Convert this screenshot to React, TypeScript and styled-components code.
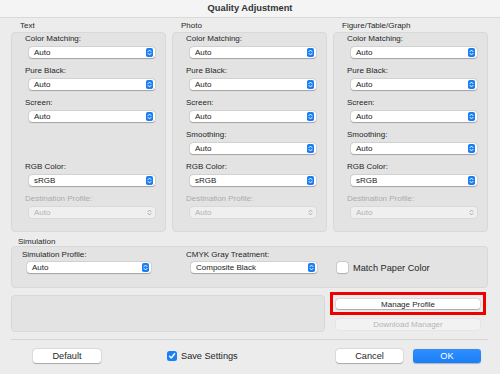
import styled, { createGlobalStyle } from "styled-components";

const GlobalStyle = createGlobalStyle`
  html, body {
    margin: 0;
    padding: 0;
    background: #ececec;
  }
  * {
    box-sizing: border-box;
  }
`;

const Window = styled.div`
  width: 500px;
  height: 374px;
  display: flex;
  flex-direction: column;
  background: #ececec;
  font-family: "Liberation Sans", Arial, sans-serif;
  color: #262626;
  overflow: hidden;
`;

const TitleBar = styled.div`
  height: 18px;
  flex: none;
  display: flex;
  align-items: center;
  justify-content: center;
  background: #f4f4f4;
  border-bottom: 1px solid #d9d9d9;
  font-size: 9.3px;
  font-weight: 700;
  color: #333;
  padding-bottom: 1px;
`;

const Body = styled.div`
  padding: 0 12px 0 11px;
  display: flex;
  flex-direction: column;
`;

const Columns = styled.div`
  display: grid;
  grid-template-columns: repeat(3, 155px);
  column-gap: 6px;
  margin-top: 3px;
`;

const SectionLabel = styled.div<{ $indent?: number; $top?: number }>`
  font-size: 8px;
  line-height: 10px;
  height: 10px;
  margin-top: ${(p) => p.$top ?? 0}px;
  padding-left: ${(p) => p.$indent ?? 9}px;
  color: #2a2a2a;
`;

const GroupBox = styled.div`
  background: #e3e3e3;
  border: 1px solid #d8d8d8;
  border-radius: 4px;
`;

const ColumnBox = styled(GroupBox)`
  margin-top: 1px;
  height: 200px;
  padding: 1px 10px 0 13px;
  display: flex;
  flex-direction: column;
`;

const Field = styled.div`
  display: flex;
  flex-direction: column;
  & + & {
    margin-top: 8px;
  }
`;

const Spacer = styled.div`
  height: 24px;
  margin-top: 8px;
  & + ${Field} {
    margin-top: 8px;
  }
`;

const FieldLabel = styled.div<{ $disabled?: boolean }>`
  font-size: 8px;
  line-height: 10px;
  height: 10px;
  white-space: nowrap;
  color: ${(p) => (p.$disabled ? "#ababab" : "#262626")};
`;

const Select = styled.div<{ $width: number; $disabled?: boolean }>`
  margin-top: 3px;
  margin-left: 4px;
  width: ${(p) => p.$width}px;
  height: 11px;
  border-radius: 3px;
  background: ${(p) => (p.$disabled ? "#efefef" : "#ffffff")};
  box-shadow: ${(p) =>
    p.$disabled
      ? "0 0 0 0.5px rgba(0,0,0,0.08)"
      : "0 0.5px 1px rgba(0,0,0,0.25), 0 0 0 0.5px rgba(0,0,0,0.1)"};
  display: flex;
  align-items: center;
  justify-content: space-between;
  padding: 0 2px 0 5px;
  font-size: 8px;
  color: ${(p) => (p.$disabled ? "#b3b3b3" : "#222")};
`;

const Stepper = ({ disabled }: { disabled?: boolean }) => (
  <svg width="7" height="9" viewBox="0 0 7 9">
    {!disabled && <rect x="0" y="0" width="7" height="9" rx="1.8" fill="#1c7ef7" />}
    <path
      d="M2 3.6 L3.5 2.1 L5 3.6 M2 5.4 L3.5 6.9 L5 5.4"
      fill="none"
      stroke={disabled ? "#a8a8a8" : "#fff"}
      strokeWidth="1"
      strokeLinecap="round"
      strokeLinejoin="round"
    />
  </svg>
);

const Popup = ({
  value,
  width = 126,
  disabled,
}: {
  value: string;
  width?: number;
  disabled?: boolean;
}) => (
  <Select $width={width} $disabled={disabled}>
    <span>{value}</span>
    <Stepper disabled={disabled} />
  </Select>
);

const SimulationLabel = styled(SectionLabel)`
  height: 9px;
  line-height: 9px;
`;

const SimulationBox = styled(GroupBox)`
  height: 42px;
  display: grid;
  grid-template-columns: 164px 151px auto;
  padding: 3px 0 0 10px;
`;

const SimField = styled.div`
  display: flex;
  flex-direction: column;
  & ${Select} {
    margin-top: 2px;
    margin-left: 5px;
  }
`;

const CheckRow = styled.label`
  display: flex;
  align-items: center;
  gap: 5px;
  height: 11px;
  font-size: 9.2px;
  color: #262626;
`;

const MatchRow = styled(CheckRow)`
  margin-top: 12px;
`;

const CheckBox = styled.span<{ $checked?: boolean }>`
  width: ${(p) => (p.$checked ? 10 : 11)}px;
  height: ${(p) => (p.$checked ? 10 : 11)}px;
  border-radius: 2.5px;
  display: inline-flex;
  align-items: center;
  justify-content: center;
  background: ${(p) => (p.$checked ? "#1c7ef7" : "#fff")};
  box-shadow: ${(p) =>
    p.$checked
      ? "none"
      : "0 0 0 0.5px rgba(0,0,0,0.2), 0 0.5px 1px rgba(0,0,0,0.15)"};
`;

const Check = () => (
  <svg width="10" height="10" viewBox="0 0 10 10">
    <path
      d="M2.6 5.2 L4.3 7 L7.6 2.8"
      fill="none"
      stroke="#fff"
      strokeWidth="1.4"
      strokeLinecap="round"
      strokeLinejoin="round"
    />
  </svg>
);

const ProfileRow = styled.div`
  display: grid;
  grid-template-columns: 314px 156px;
  column-gap: 5px;
  margin-top: 4px;
`;

const EmptyBox = styled(GroupBox)`
  margin-top: 3px;
  height: 37px;
`;

const ProfileActions = styled.div`
  display: flex;
  flex-direction: column;
`;

const Highlight = styled.div`
  border: 3px solid #ee0000;
  padding: 4px 3px 3px;
`;

const SmallButton = styled.button<{ $disabled?: boolean }>`
  all: unset;
  box-sizing: border-box;
  width: 144px;
  height: ${(p) => (p.$disabled ? 11 : 10)}px;
  display: flex;
  align-items: center;
  justify-content: center;
  border-radius: 2.5px;
  font-family: "Liberation Sans", Arial, sans-serif;
  font-size: 8px;
  background: ${(p) => (p.$disabled ? "#f2f2f2" : "#fff")};
  color: ${(p) => (p.$disabled ? "#b5b5b5" : "#262626")};
  box-shadow: ${(p) =>
    p.$disabled
      ? "0 0 0 0.5px rgba(0,0,0,0.06)"
      : "0 0.5px 1px rgba(0,0,0,0.25), 0 0 0 0.5px rgba(0,0,0,0.1)"};
`;

const DownloadButton = styled(SmallButton)`
  margin: 4px 0 0 6px;
`;

const Separator = styled.div`
  margin-top: 7px;
  height: 1px;
  background: #d6d6d6;
`;

const Footer = styled.div`
  margin-top: 9px;
  display: flex;
  align-items: center;
  padding-right: 7px;
`;

const PushButton = styled.button<{ $primary?: boolean; $width: number }>`
  all: unset;
  box-sizing: border-box;
  width: ${(p) => p.$width}px;
  height: 14px;
  display: flex;
  align-items: center;
  justify-content: center;
  border-radius: 3px;
  font-family: "Liberation Sans", Arial, sans-serif;
  font-size: 9.2px;
  color: ${(p) => (p.$primary ? "#fff" : "#262626")};
  background: ${(p) =>
    p.$primary ? "linear-gradient(#2f8ffc, #1a7ef8)" : "#fff"};
  box-shadow: ${(p) =>
    p.$primary
      ? "0 0.5px 1px rgba(0,0,0,0.25)"
      : "0 0.5px 1px rgba(0,0,0,0.25), 0 0 0 0.5px rgba(0,0,0,0.1)"};
`;

const DefaultButton = styled(PushButton)`
  margin-left: 22px;
`;

const SaveRow = styled(CheckRow)`
  margin-left: 66px;
  gap: 4px;
  height: 10px;
  margin-top: -1px;
`;

const RightButtons = styled.div`
  margin-left: auto;
  display: flex;
  gap: 10px;
`;

type Row = { label: string; value: string; disabled?: boolean } | null;

const COLUMNS: { title: string; rows: Row[] }[] = [
  {
    title: "Text",
    rows: [
      { label: "Color Matching:", value: "Auto" },
      { label: "Pure Black:", value: "Auto" },
      { label: "Screen:", value: "Auto" },
      null,
      { label: "RGB Color:", value: "sRGB" },
      { label: "Destination Profile:", value: "Auto", disabled: true },
    ],
  },
  {
    title: "Photo",
    rows: [
      { label: "Color Matching:", value: "Auto" },
      { label: "Pure Black:", value: "Auto" },
      { label: "Screen:", value: "Auto" },
      { label: "Smoothing:", value: "Auto" },
      { label: "RGB Color:", value: "sRGB" },
      { label: "Destination Profile:", value: "Auto", disabled: true },
    ],
  },
  {
    title: "Figure/Table/Graph",
    rows: [
      { label: "Color Matching:", value: "Auto" },
      { label: "Pure Black:", value: "Auto" },
      { label: "Screen:", value: "Auto" },
      { label: "Smoothing:", value: "Auto" },
      { label: "RGB Color:", value: "sRGB" },
      { label: "Destination Profile:", value: "Auto", disabled: true },
    ],
  },
];

const App = () => {
  return (
    <Window>
      <GlobalStyle />
      <TitleBar>Quality Adjustment</TitleBar>
      <Body>
        <Columns>
          {COLUMNS.map((col) => (
            <div key={col.title}>
              <SectionLabel>{col.title}</SectionLabel>
              <ColumnBox>
                {col.rows.map((row, i) =>
                  row ? (
                    <Field key={i}>
                      <FieldLabel $disabled={row.disabled}>{row.label}</FieldLabel>
                      <Popup value={row.value} disabled={row.disabled} />
                    </Field>
                  ) : (
                    <Spacer key={i} />
                  )
                )}
              </ColumnBox>
            </div>
          ))}
        </Columns>

        <SimulationLabel $indent={7} $top={5}>
          Simulation
        </SimulationLabel>
        <SimulationBox>
          <SimField>
            <FieldLabel>Simulation Profile:</FieldLabel>
            <Popup value="Auto" width={124} />
          </SimField>
          <SimField>
            <FieldLabel>CMYK Gray Treatment:</FieldLabel>
            <Popup value="Composite Black" width={126} />
          </SimField>
          <MatchRow>
            <CheckBox />
            Match Paper Color
          </MatchRow>
        </SimulationBox>

        <ProfileRow>
          <EmptyBox />
          <ProfileActions>
            <Highlight>
              <SmallButton>Manage Profile</SmallButton>
            </Highlight>
            <DownloadButton $disabled>Download Manager</DownloadButton>
          </ProfileActions>
        </ProfileRow>

        <Separator />

        <Footer>
          <DefaultButton $width={68}>Default</DefaultButton>
          <SaveRow>
            <CheckBox $checked>
              <Check />
            </CheckBox>
            Save Settings
          </SaveRow>
          <RightButtons>
            <PushButton $width={67}>Cancel</PushButton>
            <PushButton $width={68} $primary>
              OK
            </PushButton>
          </RightButtons>
        </Footer>
      </Body>
    </Window>
  );
};

export default App;
